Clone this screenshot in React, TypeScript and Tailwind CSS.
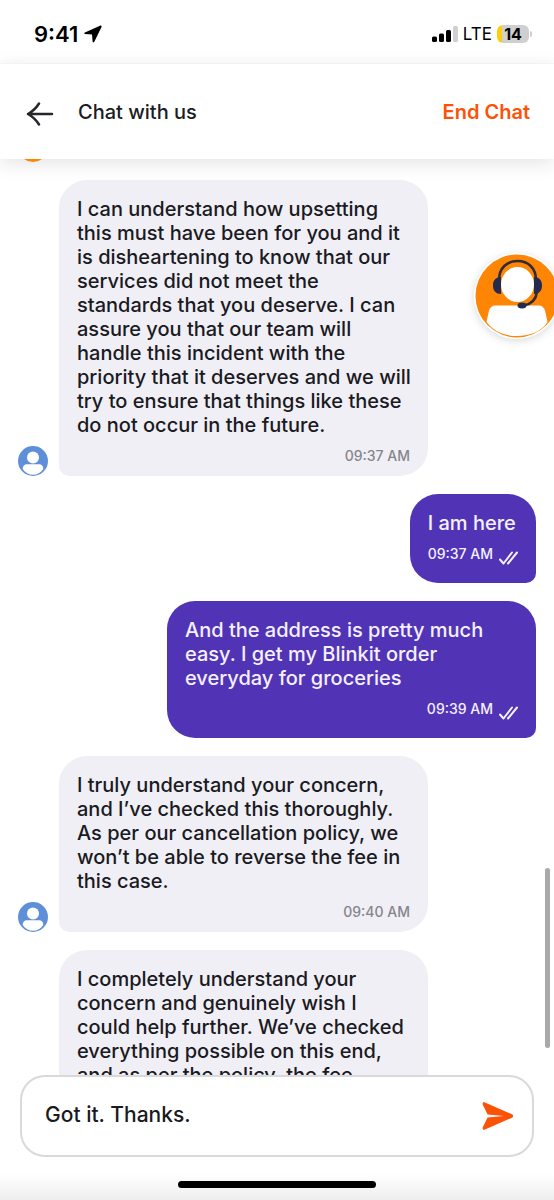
import { clsx } from "clsx";

interface Message {
  id: number;
  from: "agent" | "user";
  text: string;
  time: string;
}

const messages: Message[] = [
  {
    id: 1,
    from: "agent",
    text: "I can understand how upsetting\nthis must have been for you and it\nis disheartening to know that our\nservices did not meet the\nstandards that you deserve. I can\nassure you that our team will\nhandle this incident with the\npriority that it deserves and we will\ntry to ensure that things like these\ndo not occur in the future.",
    time: "09:37 AM",
  },
  { id: 2, from: "user", text: "I am here", time: "09:37 AM" },
  {
    id: 3,
    from: "user",
    text: "And the address is pretty much\neasy. I get my Blinkit order\neveryday for groceries",
    time: "09:39 AM",
  },
  {
    id: 4,
    from: "agent",
    text: "I truly understand your concern,\nand I’ve checked this thoroughly.\nAs per our cancellation policy, we\nwon’t be able to reverse the fee in\nthis case.",
    time: "09:40 AM",
  },
  {
    id: 5,
    from: "agent",
    text: "I completely understand your\nconcern and genuinely wish I\ncould help further. We’ve checked\neverything possible on this end,\nand as per the policy, the fee",
    time: "09:40 AM",
  },
];

const StatusBar = () => (
  <div className="flex h-16 shrink-0 items-center justify-between border-b border-[#fafafa] pt-1 pr-[22px] pl-[34px] text-black">
    <div className="flex items-center gap-1.5">
      <span className="text-[22px] leading-7 font-semibold">9:41</span>
      <svg className="size-[18px]" viewBox="0 0 18 18" fill="currentColor">
        <path d="M16 .7.9 7.5C0 8 .2 9 1.200 9.100L8 9.600l.6 6.900c.1 1 1.200 1.200 1.700.2L17.500 2c.5-1-.5-1.800-1.500-1.300Z" />
      </svg>
    </div>
    <div className="flex items-center gap-[5px]">
      <svg className="h-4 w-[26px]" viewBox="0 0 26 16">
        <rect x="0" y="10.500" width="5" height="5.500" rx="1.500" />
        <rect x="7" y="7.500" width="5" height="8.500" rx="1.500" />
        <rect x="14" y="4" width="5" height="12" rx="1.500" />
        <rect x="21" y="0" width="5" height="16" rx="1.500" fill="#d0d0d0" />
      </svg>
      <span className="text-[17px] leading-6">LTE</span>
      <div className="flex items-center gap-px">
        <div className="flex h-[18px] w-8 items-center justify-center rounded-md bg-linear-to-r from-[#fcce0b] from-[5px] to-[#cfcfcf] to-[5px] text-base leading-none font-bold">
          14
        </div>
        <div className="h-1.5 w-0.5 rounded-r-full bg-[#cfcfcf]" />
      </div>
    </div>
  </div>
);

const Header = () => (
  <header className="relative z-10 flex h-[95px] shrink-0 items-center bg-white pr-6 pl-[26px] shadow-[0_4px_18px_rgba(30,35,60,0.12)]">
    <button type="button" aria-label="Back" className="pt-1 text-[#26272b]">
      <svg className="h-6 w-7" viewBox="0 0 28 24" fill="none" stroke="currentColor" strokeWidth="2.500" strokeLinecap="round" strokeLinejoin="round">
        <path d="M26 12H2M13 1.500C10.500 5.500 6.500 9.500 2 12c4.500 2.500 8.500 6.500 11 10.500" />
      </svg>
    </button>
    <h1 className="ml-6 flex-1 text-[20px] leading-6 font-medium text-[#1c1c22]">Chat with us</h1>
    <button type="button" className="text-[20px] leading-6 font-semibold text-[#fc5208]">
      End Chat
    </button>
  </header>
);

const Avatar = () => (
  <svg className="size-[30px] shrink-0" viewBox="0 0 30 30">
    <circle cx="15" cy="15" r="15" fill="#5e8fd8" />
    <circle cx="15" cy="11.500" r="6" fill="#fff" />
    <path d="M4.700 23c0-3.300 1.600-4.800 4.300-4.800h12c2.700 0 4.300 1.500 4.300 4.800-2.500 3.700-6 5.800-10.300 5.800S7.200 26.700 4.700 23Z" fill="#fff" />
  </svg>
);

const DoubleCheck = () => (
  <svg className="h-3.5 w-[19px]" viewBox="0 0 19 14" fill="none" stroke="currentColor" strokeWidth="2" strokeLinecap="round" strokeLinejoin="round">
    <path d="M1 8.500 4.500 12.500 13 1.500M9 12.500 18 1.500" />
  </svg>
);

const Bubble = ({ message }: { message: Message }) => {
  const isUser = message.from === "user";
  const isLong = message.text.includes("\n");

  return (
    <li className={clsx("flex items-end gap-[11px]", isUser && "justify-end")}>
      {!isUser && <Avatar />}
      <div
        className={clsx(
          "max-w-[369px] px-[18px] pt-[17px]",
          isUser
            ? "rounded-[28px] rounded-br-[10px] bg-[#5134b5] pb-[18px] text-[#f4f0ff]"
            : "rounded-[28px] rounded-bl-[10px] bg-[#f0eff5] pb-[11px] text-[#1a1a22]",
          isLong && "w-full"
        )}
      >
        <p className="text-[20px] leading-6 font-medium whitespace-pre">{message.text}</p>
        <div
          className={clsx(
            "flex items-end justify-end gap-1.5 text-[14px] leading-[18px]",
            isUser ? "mt-2.5 h-5" : "mt-2.5 text-[#85858c]"
          )}
        >
          <time className={clsx("font-medium", isUser && "self-start")}>{message.time}</time>
          {isUser && <DoubleCheck />}
        </div>
      </div>
    </li>
  );
};

const SupportBadge = () => (
  <button
    type="button"
    aria-label="Support agent"
    className="absolute top-[253px] -right-1.5 z-10 size-[86px] rounded-full shadow-[0_2px_8px_rgba(0,0,0,0.15)]"
  >
    <svg className="size-full" viewBox="0 0 86 86">
      <circle cx="43" cy="43" r="43" fill="#fff" />
      <circle cx="43" cy="43" r="41.500" fill="#ff8505" />
      <path d="M12.500 69 15 57.500c1-3 3-5 6-5h44c3 0 5 2 6 5L73.500 69C68 78 56 83 43 83S19 78 12.500 69Z" fill="#fff" />
      <ellipse cx="43.500" cy="31.500" rx="16.500" ry="17.500" fill="#fff" />
      <path d="M25 27C25 15 33 8 43.500 8S62 15 62 27M63 39c-1 8-6 12-13 13.500" fill="none" stroke="#2d2b38" strokeWidth="2.500" />
      <path d="M27 24v17c-5 0-8-3-8-8.500s3-8.500 8-8.500ZM60 24v17c5 0 8-3 8-8.500S65 24 60 24Z" fill="#252a4f" />
      <ellipse cx="48" cy="52.500" rx="4.500" ry="3" fill="#252a4f" />
    </svg>
  </button>
);

const Composer = () => (
  <form
    className="mx-5 flex h-[82px] shrink-0 items-center rounded-[25px] border-2 border-[#d9d9db] bg-white pr-[18px] pl-[23px]"
    onSubmit={(e) => e.preventDefault()}
  >
    <input
      type="text"
      aria-label="Message"
      defaultValue="Got it. Thanks."
      className="min-w-0 flex-1 pb-0.5 text-[21px] leading-7 font-medium text-[#1a1a22] outline-none"
    />
    <button type="submit" aria-label="Send" className="text-[#fc5208]">
      <svg className="h-7 w-8" viewBox="0 0 32 28" fill="currentColor">
        <path d="M3 .5 30 12.300c1.700.8 1.700 2.600 0 3.400L3 27.500C1.300 28.200.1 26.800.8 25.300L5.600 15.600 22 14 5.600 12.400.8 2.700C.1 1.200 1.300-.2 3 .5Z" />
      </svg>
    </button>
  </form>
);

export default function App() {
  return (
    <div className="relative flex h-screen flex-col overflow-hidden bg-white font-['Inter','Liberation_Sans',sans-serif]">
      <StatusBar />
      <Header />
      <main className="min-h-0 flex-1 overflow-hidden px-[18px]">
        <div className="relative z-20 flex h-[3px] items-end overflow-hidden">
          <div className="size-[30px] shrink-0 rounded-full bg-[#ff8505]" />
        </div>
        <ul className="mt-[18px] flex flex-col gap-[18px]">
          {messages.map((message) => (
            <Bubble key={message.id} message={message} />
          ))}
        </ul>
      </main>
      <Composer />
      <div className="flex h-[43px] shrink-0 items-end justify-center bg-linear-to-b from-white from-40% to-[#eeeeee] pb-3">
        <div className="h-[7px] w-[198px] rounded-full bg-black" />
      </div>
      <SupportBadge />
      <div className="absolute top-[868px] right-1 h-[180px] w-[5px] rounded-full bg-[#a9a9a9]" />
    </div>
  );
}
